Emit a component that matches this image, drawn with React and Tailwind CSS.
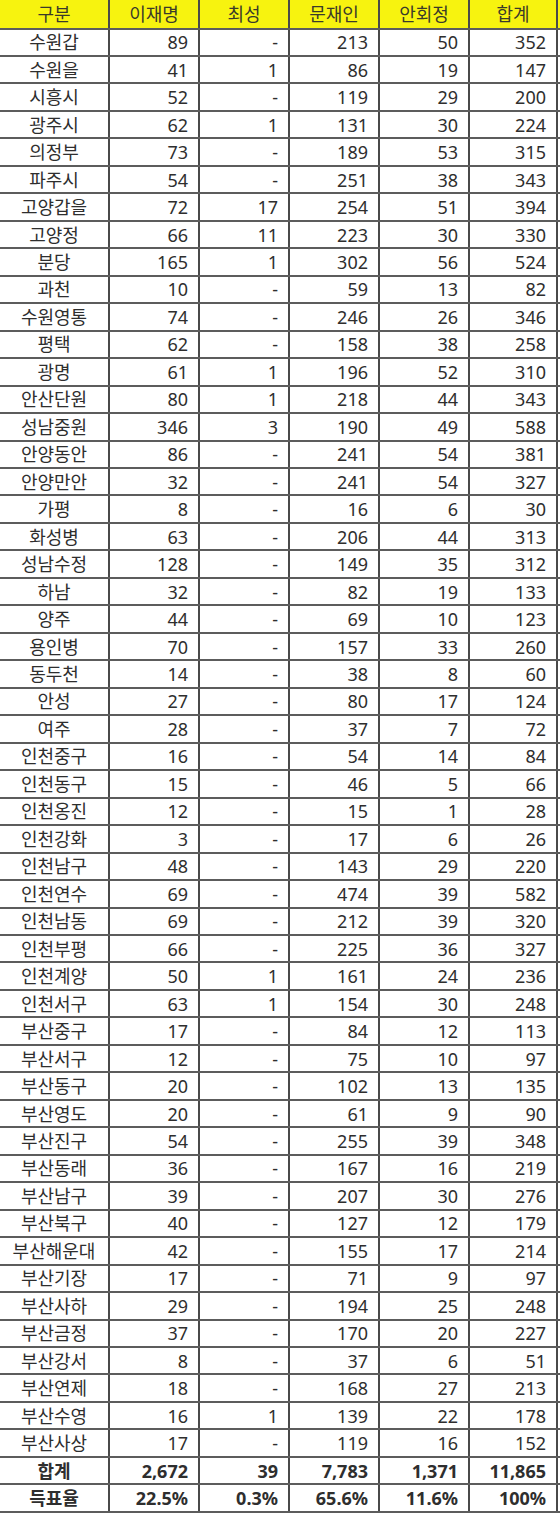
import React from 'react';

const ROWS = [
  ['수원갑', '89', '-', '213', '50', '352'],
  ['수원을', '41', '1', '86', '19', '147'],
  ['시흥시', '52', '-', '119', '29', '200'],
  ['광주시', '62', '1', '131', '30', '224'],
  ['의정부', '73', '-', '189', '53', '315'],
  ['파주시', '54', '-', '251', '38', '343'],
  ['고양갑을', '72', '17', '254', '51', '394'],
  ['고양정', '66', '11', '223', '30', '330'],
  ['분당', '165', '1', '302', '56', '524'],
  ['과천', '10', '-', '59', '13', '82'],
  ['수원영통', '74', '-', '246', '26', '346'],
  ['평택', '62', '-', '158', '38', '258'],
  ['광명', '61', '1', '196', '52', '310'],
  ['안산단원', '80', '1', '218', '44', '343'],
  ['성남중원', '346', '3', '190', '49', '588'],
  ['안양동안', '86', '-', '241', '54', '381'],
  ['안양만안', '32', '-', '241', '54', '327'],
  ['가평', '8', '-', '16', '6', '30'],
  ['화성병', '63', '-', '206', '44', '313'],
  ['성남수정', '128', '-', '149', '35', '312'],
  ['하남', '32', '-', '82', '19', '133'],
  ['양주', '44', '-', '69', '10', '123'],
  ['용인병', '70', '-', '157', '33', '260'],
  ['동두천', '14', '-', '38', '8', '60'],
  ['안성', '27', '-', '80', '17', '124'],
  ['여주', '28', '-', '37', '7', '72'],
  ['인천중구', '16', '-', '54', '14', '84'],
  ['인천동구', '15', '-', '46', '5', '66'],
  ['인천옹진', '12', '-', '15', '1', '28'],
  ['인천강화', '3', '-', '17', '6', '26'],
  ['인천남구', '48', '-', '143', '29', '220'],
  ['인천연수', '69', '-', '474', '39', '582'],
  ['인천남동', '69', '-', '212', '39', '320'],
  ['인천부평', '66', '-', '225', '36', '327'],
  ['인천계양', '50', '1', '161', '24', '236'],
  ['인천서구', '63', '1', '154', '30', '248'],
  ['부산중구', '17', '-', '84', '12', '113'],
  ['부산서구', '12', '-', '75', '10', '97'],
  ['부산동구', '20', '-', '102', '13', '135'],
  ['부산영도', '20', '-', '61', '9', '90'],
  ['부산진구', '54', '-', '255', '39', '348'],
  ['부산동래', '36', '-', '167', '16', '219'],
  ['부산남구', '39', '-', '207', '30', '276'],
  ['부산북구', '40', '-', '127', '12', '179'],
  ['부산해운대', '42', '-', '155', '17', '214'],
  ['부산기장', '17', '-', '71', '9', '97'],
  ['부산사하', '29', '-', '194', '25', '248'],
  ['부산금정', '37', '-', '170', '20', '227'],
  ['부산강서', '8', '-', '37', '6', '51'],
  ['부산연제', '18', '-', '168', '27', '213'],
  ['부산수영', '16', '1', '139', '22', '178'],
  ['부산사상', '17', '-', '119', '16', '152'],
];

const HEAD = ['구분', '이재명', '최성', '문재인', '안회정', '합계'];
const FOOT = [
  ['합계', '2,672', '39', '7,783', '1,371', '11,865'],
  ['득표율', '22.5%', '0.3%', '65.6%', '11.6%', '100%'],
];

const grid = 'grid grid-cols-[110px_90px_90px_90px_90px_88px] border-b-2 border-[#5c5c5c]';

function Row({ cells, bold }) {
  return (
    <div className={`${grid} h-[27.47px]`}>
      {cells.map((c, i) => (
        <div
          key={i}
          className={`flex items-center border-r-2 border-[#4a4a4a] ${i === 0 ? 'justify-center' : 'justify-end pr-[10px]'} ${bold ? 'font-bold' : ''}`}
        >
          {c}
        </div>
      ))}
    </div>
  );
}

export default function App() {
  return (
    <div
      className="w-[560px] h-[1514px] bg-white text-[18px] text-[#2e2e2e] leading-none overflow-hidden"
      style={{ fontFamily: '"Noto Sans", "Noto Sans CJK KR", sans-serif' }}
    >
      <div className={`${grid} h-[29.5px] bg-[#f7f30f]`}>
        {HEAD.map((h, i) => (
          <div key={i} className="flex items-center justify-center border-r-2 border-[#4a4a4a] text-[#3a3a2a]">
            {h}
          </div>
        ))}
      </div>
      {ROWS.map((r, i) => (
        <Row key={i} cells={r} />
      ))}
      {FOOT.map((r, i) => (
        <Row key={'f' + i} cells={r} bold />
      ))}
    </div>
  );
}
